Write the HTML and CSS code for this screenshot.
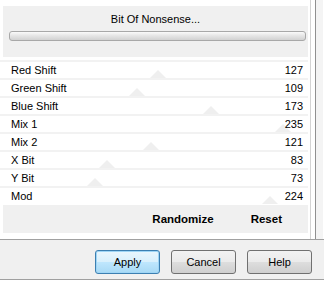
FILE: index.html
```html
<!DOCTYPE html>
<html lang="en">
<head>
  <meta charset="UTF-8">
  <title>Bit Of Nonsense</title>
  <link rel="stylesheet" href="styles.css">
</head>
<body>
  <div class="dialog">
    <div class="top">
      <div class="main">
        <div class="header">
          <div class="title">Bit Of Nonsense...</div>
          <div class="progress"></div>
        </div>
        <div class="rows">
          <div class="row"><span class="thumb" style="--v:127"></span><span>Red Shift</span><span>127</span></div>
          <div class="row"><span class="thumb" style="--v:109"></span><span>Green Shift</span><span>109</span></div>
          <div class="row"><span class="thumb" style="--v:173"></span><span>Blue Shift</span><span>173</span></div>
          <div class="row"><span class="thumb" style="--v:235"></span><span>Mix 1</span><span>235</span></div>
          <div class="row"><span class="thumb" style="--v:121"></span><span>Mix 2</span><span>121</span></div>
          <div class="row"><span class="thumb" style="--v:83"></span><span>X Bit</span><span>83</span></div>
          <div class="row"><span class="thumb" style="--v:73"></span><span>Y Bit</span><span>73</span></div>
          <div class="row"><span class="thumb" style="--v:224"></span><span>Mod</span><span>224</span></div>
        </div>
        <div class="actions">
          <span>Randomize</span>
          <span>Reset</span>
        </div>
      </div>
      <div class="frame"></div>
    </div>
    <div class="footer">
      <button class="btn default">Apply</button>
      <button class="btn">Cancel</button>
      <button class="btn">Help</button>
    </div>
  </div>
</body>
</html>
```

FILE: styles.css
```css
body {
  margin: 0;
  padding: 0;
  background: #fff;
  font-family: "Liberation Sans", Arial, sans-serif;
  font-size: 11px;
  color: #000;
}
.dialog {
  width: 324px;
  height: 283px;
}
.top {
  display: flex;
  height: 239px;
  border-bottom: 1px solid #a0a0a0;
}
.main {
  width: 310px;
  padding-top: 6px;
}
.header {
  margin-left: 3px;
  width: 305px;
  height: 51px;
  background: #f0f0f0;
  box-sizing: border-box;
  padding: 8px 0 0 6px;
}
.title {
  text-align: center;
  height: 17px;
  line-height: 11px;
  padding-right: 6px;
}
.progress {
  width: 297px;
  height: 10px;
  box-sizing: border-box;
  border: 1px solid #a8a8a8;
  border-radius: 3px;
  background: linear-gradient(#fafafa, #e6e6e6 45%, #d2d2d2);
}
.rows {
  padding-top: 3px;
}
.row {
  position: relative;
  display: flex;
  justify-content: space-between;
  align-items: center;
  height: 18px;
  box-sizing: border-box;
  border-top: 2px solid #f2f2f2;
  padding: 0 5px 0 11px;
}
.row span {
  position: relative;
}
.row .thumb {
  position: absolute;
  bottom: 0;
  left: calc(3px + var(--v) * 1.157px);
  width: 0;
  height: 0;
  border-left: 8px solid transparent;
  border-right: 8px solid transparent;
  border-bottom: 8px solid #efefef;
}
.actions {
  margin-left: 3px;
  width: 305px;
  height: 28px;
  margin-top: 1px;
  background: #f0f0f0;
  display: flex;
  justify-content: flex-end;
  align-items: center;
  gap: 37px;
  padding-right: 26px;
  box-sizing: border-box;
  font-weight: bold;
  font-size: 11.5px;
}
.frame {
  width: 14px;
  box-sizing: border-box;
  margin-left: 2px;
  border-left: 1px solid #d4d4d4;
  padding-left: 4px;
  position: relative;
}
.frame::after {
  content: "";
  display: block;
  height: 100%;
  width: 7px;
  border-left: 1px solid #909090;
  background: #f4f4f4;
}
.footer {
  height: 40px;
  background: #f0f0f0;
  border-bottom: 1px solid #a0a0a0;
  box-sizing: border-box;
  display: flex;
  justify-content: flex-end;
  gap: 11px;
  padding: 10px 12px 0 0;
}
.btn {
  width: 65px;
  height: 24px;
  font-family: "Liberation Sans", Arial, sans-serif;
  font-size: 11px;
  color: #000;
  border: 1px solid #707070;
  border-radius: 3px;
  background: linear-gradient(#f2f2f2, #ebebeb 48%, #dddddd 52%, #cfcfcf);
  padding: 0;
}
.btn.default {
  border-color: #3c7fb1;
  background: linear-gradient(#eaf6fd, #d9f0fc 48%, #bee6fd 52%, #a7d9f5);
  box-shadow: inset 0 0 0 1px #9fd5f5;
}
```
